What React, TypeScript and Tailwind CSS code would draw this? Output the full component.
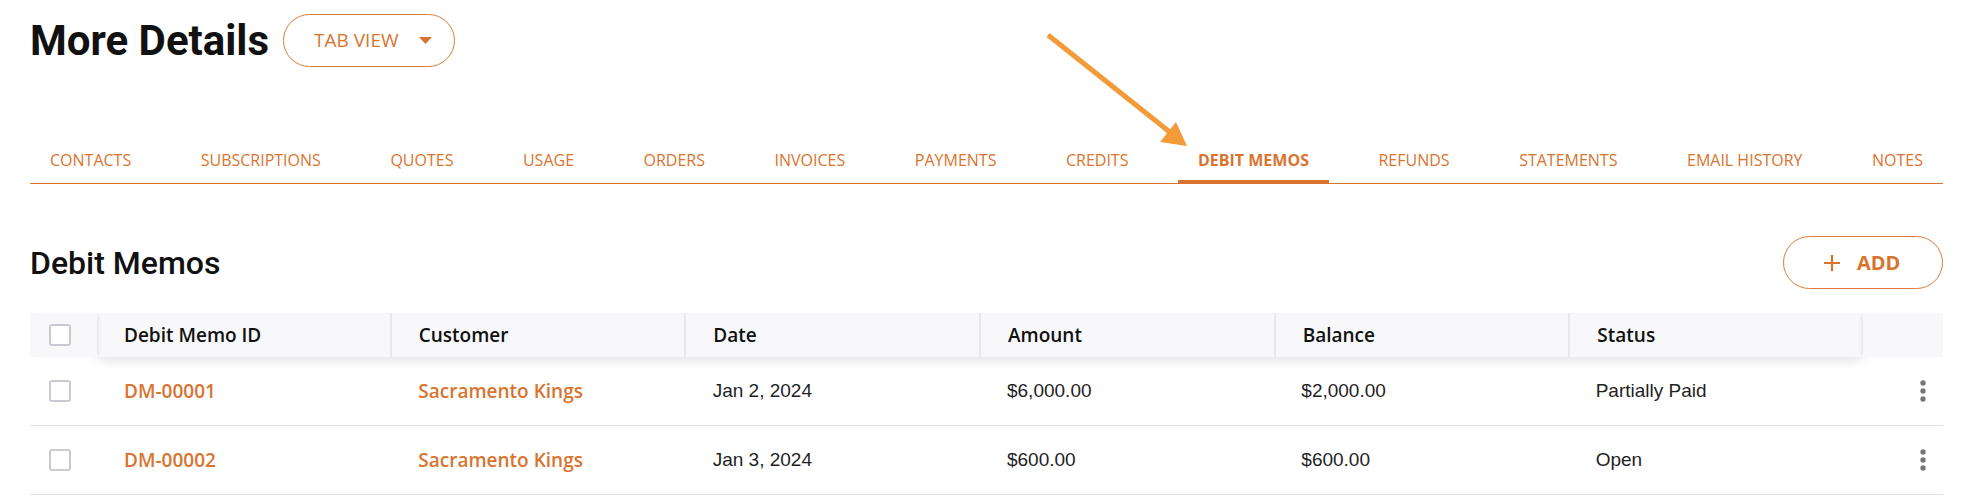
import React from "react";

const ORANGE = "text-[#d9742f]";

const tabs = [
  "CONTACTS",
  "SUBSCRIPTIONS",
  "QUOTES",
  "USAGE",
  "ORDERS",
  "INVOICES",
  "PAYMENTS",
  "CREDITS",
  "DEBIT MEMOS",
  "REFUNDS",
  "STATEMENTS",
  "EMAIL HISTORY",
  "NOTES",
];

const columns = ["Debit Memo ID", "Customer", "Date", "Amount", "Balance", "Status"];

const rows = [
  { id: "DM-00001", customer: "Sacramento Kings", date: "Jan 2, 2024", amount: "$6,000.00", balance: "$2,000.00", status: "Partially Paid" },
  { id: "DM-00002", customer: "Sacramento Kings", date: "Jan 3, 2024", amount: "$600.00", balance: "$600.00", status: "Open" },
];

function Checkbox() {
  return <div className="w-[22px] h-[22px] border-2 border-[#c9c9d3] rounded-[3px] bg-white" />;
}

function Kebab() {
  return (
    <svg width="32" height="32" viewBox="0 0 24 24" fill="#767676">
      <circle cx="12" cy="6" r="2" />
      <circle cx="12" cy="12" r="2" />
      <circle cx="12" cy="18" r="2" />
    </svg>
  );
}

export default function App() {
  return (
    <div className="relative w-full min-h-screen bg-white pl-[30px] pr-[45px] pt-[14px]">
      {/* Title row */}
      <div className="flex items-center h-[53px] gap-[14px]">
        <h1 className="font-['Roboto',sans-serif] font-bold text-[42px] leading-[42px] text-[#111111]">More Details</h1>
        <button className="h-[53px] w-[172px] rounded-full border border-[#dd7b3a] flex items-center pl-[30px] pr-[22px] justify-between">
          <span className={`font-['Open_Sans',sans-serif] text-[19px] leading-none ${ORANGE}`}>TAB VIEW</span>
          <svg width="13" height="7" viewBox="0 0 13 7">
            <path d="M0 0 L13 0 L6.5 7 Z" fill="#d9742f" />
          </svg>
        </button>
      </div>

      {/* Tabs */}
      <div className="mt-[68px] flex justify-between border-b border-[#d9742f]">
        {tabs.map((t) => {
          const active = t === "DEBIT MEMOS";
          return (
            <div key={t} className="relative px-[20px] pt-[13px] pb-[11px]">
              <span
                className={`font-['Open_Sans',sans-serif] text-[16px] leading-[24px] whitespace-nowrap ${ORANGE} ${active ? "font-bold" : "font-normal"}`}
              >
                {t}
              </span>
              {active && <span className="absolute left-0 right-0 bottom-[-1px] h-[4px] bg-[#d9742f]" />}
            </div>
          );
        })}
      </div>

      {/* Section heading */}
      <div className="mt-[52px] flex items-center justify-between h-[53px]">
        <h2 className="font-['Roboto',sans-serif] font-medium text-[32px] leading-[36px] text-[#111111]">Debit Memos</h2>
        <button className="h-[53px] w-[160px] rounded-full border border-[#dd7b3a] flex items-center pl-[40px] gap-[17px]">
          <svg width="16" height="16" viewBox="0 0 16 16">
            <path d="M8 0 V16 M0 8 H16" stroke="#d9742f" strokeWidth="2.2" />
          </svg>
          <span className={`font-['Open_Sans',sans-serif] font-bold text-[20px] leading-none ${ORANGE}`}>ADD</span>
        </button>
      </div>

      {/* Table */}
      <div className="mt-[24px] flex flex-col">
        {/* Header */}
        <div className="flex h-[44px] bg-[#f8f8fa]">
          <div className="relative z-20 w-[67px] shrink-0 flex items-center pl-[19px] bg-[#f8f8fa] shadow-[3px_0_4px_-2px_rgba(0,0,0,0.10)]">
            <Checkbox />
          </div>
          <div className="relative z-10 flex flex-1 bg-[#f8f8fa] shadow-[0_6px_10px_-2px_rgba(0,0,0,0.11)]">
            {columns.map((c, i) => (
              <div
                key={c}
                className={`flex-1 flex items-center pl-[27px] ${i > 0 ? "border-l-2 border-[#e9e9ed]" : ""}`}
              >
                <span className="font-['Open_Sans',sans-serif] font-semibold text-[19px] text-[#111111] whitespace-nowrap">{c}</span>
              </div>
            ))}
          </div>
          <div className="relative z-20 w-[80px] shrink-0 bg-[#f8f8fa] shadow-[-3px_0_4px_-2px_rgba(0,0,0,0.10)]" />
        </div>

        {/* Rows */}
        {rows.map((r) => (
          <div key={r.id} className="flex h-[69px] border-b border-[#e2e2e2] bg-white">
            <div className="w-[67px] shrink-0 flex items-center pl-[19px]">
              <Checkbox />
            </div>
            <div className="flex flex-1">
              <div className="flex-1 flex items-center pl-[27px]">
                <span className={`font-['Open_Sans',sans-serif] font-semibold text-[19px] ${ORANGE}`}>{r.id}</span>
              </div>
              <div className="flex-1 flex items-center pl-[27px]">
                <span className={`font-['Open_Sans',sans-serif] font-semibold text-[19px] ${ORANGE}`}>{r.customer}</span>
              </div>
              {[r.date, r.amount, r.balance, r.status].map((v, i) => (
                <div key={i} className="flex-1 flex items-center pl-[27px]">
                  <span className="font-['Liberation_Sans',Arial,sans-serif] text-[19px] text-[#1f1f1f]">{v}</span>
                </div>
              ))}
            </div>
            <div className="w-[80px] shrink-0 flex items-center justify-end pr-[4px]">
              <Kebab />
            </div>
          </div>
        ))}
      </div>

      {/* Annotation arrow */}
      <svg className="absolute left-0 top-0 pointer-events-none" width="1988" height="200" viewBox="0 0 1988 200">
        <line x1="1048" y1="35" x2="1171" y2="133" stroke="#f29b38" strokeWidth="5" />
        <polygon points="1187,146 1160,142 1176,122" fill="#f29b38" />
      </svg>
    </div>
  );
}
